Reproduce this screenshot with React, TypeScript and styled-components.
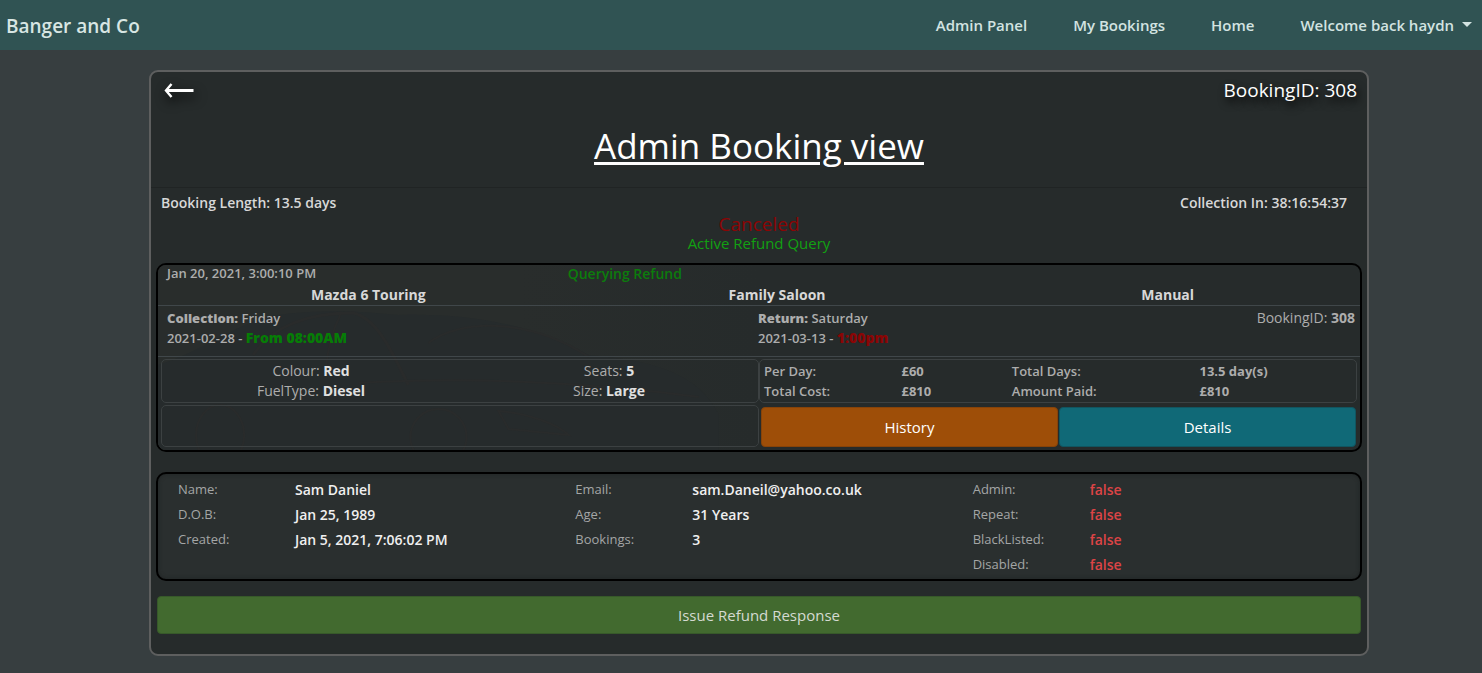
import React from "react";
import styled, { createGlobalStyle } from "styled-components";

const GlobalStyle = createGlobalStyle`
  *, *::before, *::after { box-sizing: border-box; }
  html { background: #373e40; }
  body {
    margin: 0;
    font-family: "Open Sans", "Noto Sans", sans-serif;
    font-size: 15px;
    line-height: 20px;
    color: #d8d8d8;
  }
  button { font-family: inherit; cursor: pointer; }
`;

const NavBar = styled.nav`
  display: flex;
  align-items: center;
  justify-content: space-between;
  height: 50px;
  padding: 0 10px 0 6px;
  background: #305353;
`;

const Brand = styled.a`
  font-size: 19px;
  font-weight: 600;
  line-height: 24px;
  padding-top: 2px;
  color: #d8e6e3;
  text-decoration: none;
`;

const NavLinks = styled.div`
  display: flex;
  align-items: center;
  gap: 46px;
`;

const navItem = `
  font-size: 15px;
  font-weight: 600;
  line-height: 20px;
  color: #d3e3e1;
  text-decoration: none;
`;

const NavLink = styled.a`${navItem}`;

const UserMenu = styled.button`
  ${navItem}
  display: flex;
  align-items: center;
  gap: 8px;
  padding: 0;
  border: 0;
  background: none;
`;

const Caret = styled.span`
  margin-bottom: 2px;
  border: 5px solid transparent;
  border-top-color: currentColor;
  border-bottom: 0;
`;

const Main = styled.main`
  padding: 20px 113px 16px 149px;
`;

const Panel = styled.section`
  border: 2px solid #5e5f5f;
  border-radius: 9px;
  background: #262b2b;
  padding-bottom: 20px;
`;

const PanelHeader = styled.header`
  border-bottom: 1px solid #202424;
  padding-bottom: 16px;
`;

const TopBar = styled.div`
  display: flex;
  align-items: center;
  justify-content: space-between;
  height: 36px;
  padding: 0 10px 0 13px;
`;

const BackButton = styled.button`
  display: flex;
  padding: 0;
  border: 0;
  background: none;
  color: #fff;
  filter: drop-shadow(2px 5px 6px #000);
`;

const BookingRef = styled.span`
  font-size: 19px;
  color: #fff;
  text-shadow: 2px 5px 8px #000;
`;

const Title = styled.h1`
  margin: 13px 0 0;
  font-size: 35px;
  font-weight: 400;
  line-height: 50px;
  text-align: center;
  color: #fff;
  text-decoration: underline;
  text-decoration-thickness: 3px;
  text-underline-offset: 3px;
`;

const Summary = styled.div`
  display: flex;
  justify-content: space-between;
  padding: 5px 20px 2px 10px;
  font-size: 14px;
  font-weight: 600;
`;

const Status = styled.p<{ $color: string; $size: number }>`
  margin: 0;
  text-align: center;
  font-size: ${(p) => p.$size}px;
  line-height: 19px;
  color: ${(p) => p.$color};
`;

const Content = styled.div`
  padding: 0 5px;
`;

const BookingCard = styled.article`
  position: relative;
  overflow: hidden;
  margin-top: 10px;
  border: 2px solid #000;
  border-radius: 10px;
  font-size: 14px;
  color: #adadad;
`;

const CarArt = styled.svg`
  position: absolute;
  left: 0;
  top: 0;
  width: 50%;
  height: 100%;
`;

const Layer = styled.div`
  position: relative;
`;

const MetaRow = styled.div`
  display: grid;
  grid-template-columns: repeat(3, 1fr);
  line-height: 17px;
  font-size: 13px;
  font-weight: 600;
  > * { padding-left: 9px; }
`;

const Query = styled.span`
  font-size: 14px;
  color: #0c7c0c;
`;

const VehicleRow = styled.div`
  display: grid;
  grid-template-columns: 35fr 33fr 32fr;
  padding-top: 2px;
  text-align: center;
  font-weight: 700;
  line-height: 21px;
  color: #d8d8d8;
  border-bottom: 1px solid #40474a;
`;

const DateRow = styled.div`
  display: flex;
  padding: 2px 5px 8px 9px;
  font-size: 13px;
  font-weight: 600;
  border-bottom: 1px solid #40474a;
`;

const DateCell = styled.div`
  flex: 0 0 calc(50% - 3px);
`;

const Line = styled.div`
  height: 20px;
`;

const DateTime = styled.b<{ $color: string }>`
  font-size: 14px;
  color: ${(p) => p.$color};
`;

const InnerRef = styled.span`
  margin-left: auto;
  font-size: 14px;
  font-weight: 400;
`;

const DetailGrid = styled.div`
  display: grid;
  grid-template-columns: 1fr 1fr;
  row-gap: 2px;
  padding: 2px 3px 3px;
`;

const Box = styled.div`
  border: 1px solid #3c4142;
  border-radius: 5px;
`;

const SpecBox = styled(Box)`
  display: grid;
  grid-template-columns: 1fr 1fr;
  align-content: center;
  text-align: center;
  height: 44px;
  b { color: #e0e0e0; }
`;

const CostBox = styled(Box)`
  display: grid;
  grid-template-columns: 137fr 110fr 187fr 156fr;
  align-content: center;
  margin: 0;
  padding-left: 4px;
  font-size: 13px;
  font-weight: 600;
`;

const Term = styled.dt``;

const Value = styled.dd`
  margin: 0;
  font-weight: 700;
`;

const Actions = styled.div`
  display: grid;
  grid-template-columns: 1fr 1fr;
  gap: 1px;
  padding: 2px 1px 0 2px;
`;

const ActionButton = styled.button<{ $bg: string; $edge: string }>`
  height: 40px;
  padding: 0;
  border: 1px solid ${(p) => p.$edge};
  border-radius: 4px;
  background: ${(p) => p.$bg};
  font-size: 15px;
  color: #fff;
`;

const CustomerCard = styled.section`
  display: grid;
  grid-template-columns: repeat(3, 1fr);
  margin: 20px 0 15px;
  padding: 3px 5px 2px;
  border: 2px solid #000;
  border-radius: 10px;
  background: #2a2f2f;
  box-shadow: inset 0 0 4px #1f2323;
`;

const CustomerList = styled.dl`
  display: grid;
  grid-template-columns: 117px 1fr;
  grid-auto-rows: 25px;
  align-content: start;
  margin: 0;
  padding-left: 15px;
  line-height: 25px;
`;

const Label = styled.dt`
  font-size: 13px;
  color: #a4a6a6;
`;

const Info = styled.dd<{ $flag?: boolean }>`
  margin: 0;
  font-size: 14px;
  font-weight: 600;
  color: ${(p) => (p.$flag ? "#dc4446" : "#f0f0f0")};
`;

const Footer = styled.div`
  display: flex;
  padding: 0 1px;
`;

const RefundButton = styled.button`
  flex: 1;
  height: 38px;
  border: 1px solid #37592a;
  border-radius: 4px;
  background: #426a2f;
  font-size: 15px;
  color: #d5dad2;
`;

const customer: { label: string; value: string; flag?: boolean }[][] = [
  [
    { label: "Name:", value: "Sam Daniel" },
    { label: "D.O.B:", value: "Jan 25, 1989" },
    { label: "Created:", value: "Jan 5, 2021, 7:06:02 PM" },
  ],
  [
    { label: "Email:", value: "sam.Daneil@yahoo.co.uk" },
    { label: "Age:", value: "31 Years" },
    { label: "Bookings:", value: "3" },
  ],
  [
    { label: "Admin:", value: "false", flag: true },
    { label: "Repeat:", value: "false", flag: true },
    { label: "BlackListed:", value: "false", flag: true },
    { label: "Disabled:", value: "false", flag: true },
  ],
];

function Car() {
  return (
    <CarArt viewBox="0 0 600 185" preserveAspectRatio="none" aria-hidden="true">
      <defs>
        <linearGradient id="fade" x1="0" x2="1" y1="0" y2="0">
          <stop offset="0.6" stopColor="#292d2c" />
          <stop offset="1" stopColor="#262b2b" />
        </linearGradient>
      </defs>
      <rect width="600" height="185" fill="url(#fade)" />
      <path
        d="M0 100 C50 84 80 56 120 50 C160 44 200 46 240 50 C300 48 370 56 430 90 C500 96 540 110 560 150 L560 185 L0 185Z"
        fill="#262b2c"
      />
      <g fill="none" stroke="#292b2b" strokeWidth="2">
        <path d="M95 90 C115 60 150 48 195 48 C220 54 235 90 250 120" strokeWidth="3" />
        <path d="M182 50 C174 66 170 80 168 100" />
        <path d="M270 78 C300 54 370 52 430 92" />
        <path d="M200 118 C300 112 420 116 540 132" />
        <path d="M340 146 C370 148 400 160 410 170 L350 164Z" />
        <ellipse cx="62" cy="170" rx="24" ry="30" />
        <ellipse cx="280" cy="172" rx="28" ry="28" />
      </g>
    </CarArt>
  );
}

export default function App() {
  return (
    <>
      <GlobalStyle />
      <NavBar>
        <Brand href="#">Banger and Co</Brand>
        <NavLinks>
          <NavLink href="#admin">Admin Panel</NavLink>
          <NavLink href="#bookings">My Bookings</NavLink>
          <NavLink href="#home">Home</NavLink>
          <UserMenu type="button" aria-haspopup="menu">
            Welcome back haydn
            <Caret />
          </UserMenu>
        </NavLinks>
      </NavBar>
      <Main>
        <Panel>
          <PanelHeader>
            <TopBar>
              <BackButton type="button" aria-label="Back">
                <svg width="30" height="16" viewBox="0 0 30 16" fill="none" stroke="currentColor">
                  <path d="M2 8.5H29.5" strokeWidth="3" />
                  <path d="M7.5 2L2 8.5L7.5 15" strokeWidth="2.4" />
                </svg>
              </BackButton>
              <BookingRef>BookingID: 308</BookingRef>
            </TopBar>
            <Title>Admin Booking view</Title>
          </PanelHeader>
          <Summary>
            <span>Booking Length: 13.5 days</span>
            <span>Collection In: 38:16:54:37</span>
          </Summary>
          <Status $color="#8b0505" $size={19}>Canceled</Status>
          <Status $color="#12a012" $size={15}>Active Refund Query</Status>
          <Content>
            <BookingCard>
              <Car />
              <Layer>
                <MetaRow>
                  <span>Jan 20, 2021, 3:00:10 PM</span>
                  <Query>Querying Refund</Query>
                </MetaRow>
                <VehicleRow>
                  <span>Mazda 6 Touring</span>
                  <span>Family Saloon</span>
                  <span>Manual</span>
                </VehicleRow>
                <DateRow>
                  <DateCell>
                    <Line><b>Collection:</b> Friday</Line>
                    <Line>2021-02-28 - <DateTime $color="#067d06">From 08:00AM</DateTime></Line>
                  </DateCell>
                  <div>
                    <Line><b>Return:</b> Saturday</Line>
                    <Line>2021-03-13 - <DateTime $color="#8b0505">1:00pm</DateTime></Line>
                  </div>
                  <InnerRef>BookingID: <b>308</b></InnerRef>
                </DateRow>
                <DetailGrid>
                  <SpecBox>
                    <span>Colour: <b>Red</b></span>
                    <span>Seats: <b>5</b></span>
                    <span>FuelType: <b>Diesel</b></span>
                    <span>Size: <b>Large</b></span>
                  </SpecBox>
                  <CostBox as="dl">
                    <Term>Per Day:</Term>
                    <Value>£60</Value>
                    <Term>Total Days:</Term>
                    <Value>13.5 day(s)</Value>
                    <Term>Total Cost:</Term>
                    <Value>£810</Value>
                    <Term>Amount Paid:</Term>
                    <Value>£810</Value>
                  </CostBox>
                  <Box />
                  <Actions>
                    <ActionButton type="button" $bg="#9e4e08" $edge="#874309">History</ActionButton>
                    <ActionButton type="button" $bg="#106977" $edge="#115560">Details</ActionButton>
                  </Actions>
                </DetailGrid>
              </Layer>
            </BookingCard>
            <CustomerCard>
              {customer.map((rows, i) => (
                <CustomerList key={i}>
                  {rows.map((r) => (
                    <React.Fragment key={r.label}>
                      <Label>{r.label}</Label>
                      <Info $flag={r.flag}>{r.value}</Info>
                    </React.Fragment>
                  ))}
                </CustomerList>
              ))}
            </CustomerCard>
            <Footer>
              <RefundButton type="button">Issue Refund Response</RefundButton>
            </Footer>
          </Content>
        </Panel>
      </Main>
    </>
  );
}
